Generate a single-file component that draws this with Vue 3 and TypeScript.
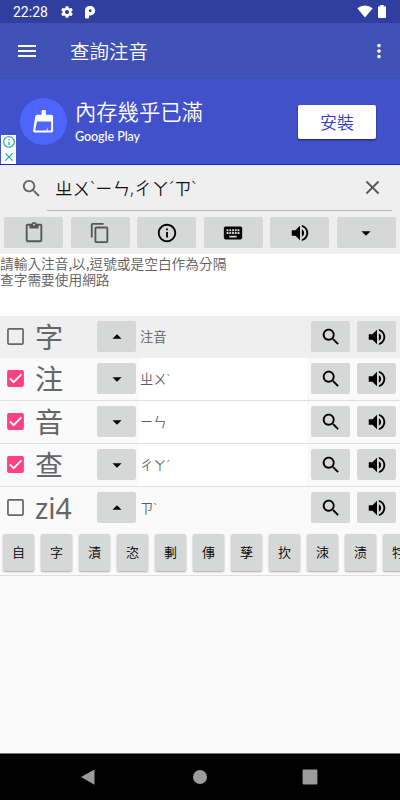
<script setup lang="ts">
interface Tool { id: string; icon: string; muted?: boolean }
interface Row { id: string; word: string; reading: string; checked: boolean; open: boolean; kind: string }

const icons: Record<string, string> = {
  search: 'M15.5 14h-.79l-.28-.27C15.41 12.59 16 11.11 16 9.5 16 5.91 13.09 3 9.5 3S3 5.91 3 9.5 5.91 16 9.5 16c1.61 0 3.09-.59 4.23-1.57l.27.28v.79l5 4.99L20.49 19l-4.99-5zm-6 0C7.01 14 5 11.99 5 9.5S7.01 5 9.5 5 14 7.01 14 9.5 11.99 14 9.5 14z',
  volume: 'M3 9v6h4l5 5V4L7 9H3zm13.5 3c0-1.77-1.02-3.29-2.5-4.03v8.05c1.48-.73 2.5-2.25 2.5-4.02zM14 3.23v2.06c2.89.86 5 3.54 5 6.71s-2.11 5.85-5 6.71v2.06c4.01-.91 7-4.49 7-8.77s-2.99-7.86-7-8.77z',
  paste: 'M19 2h-4.18C14.4.84 13.3 0 12 0S9.6.84 9.18 2H5c-1.1 0-2 .9-2 2v16c0 1.1.9 2 2 2h14c1.1 0 2-.9 2-2V4c0-1.1-.9-2-2-2zm-7 0c.55 0 1 .45 1 1s-.45 1-1 1-1-.45-1-1 .45-1 1-1zm7 18H5V4h2v3h10V4h2v16z',
  copy: 'M16 1H4c-1.1 0-2 .9-2 2v14h2V3h12V1zm3 4H8c-1.1 0-2 .9-2 2v14c0 1.1.9 2 2 2h11c1.1 0 2-.9 2-2V7c0-1.1-.9-2-2-2zm0 16H8V7h11v14z',
  info: 'M11 17h2v-6h-2v6zm1-15C6.48 2 2 6.48 2 12s4.48 10 10 10 10-4.48 10-10S17.52 2 12 2zm0 18c-4.41 0-8-3.59-8-8s3.59-8 8-8 8 3.59 8 8-3.59 8-8 8zM11 9h2V7h-2v2z',
  keyboard: 'M20 5H4c-1.1 0-1.99.9-1.99 2L2 17c0 1.1.9 2 2 2h16c1.1 0 2-.9 2-2V7c0-1.1-.9-2-2-2zm-9 3h2v2h-2V8zm0 3h2v2h-2v-2zM8 8h2v2H8V8zm0 3h2v2H8v-2zm-1 2H5v-2h2v2zm0-3H5V8h2v2zm9 7H8v-2h8v2zm0-4h-2v-2h2v2zm0-3h-2V8h2v2zm3 3h-2v-2h2v2zm0-3h-2V8h2v2z',
  down: 'M7 10l5 5 5-5z',
  up: 'M7 14l5-5 5 5z',
  close: 'M19 6.41L17.59 5 12 10.59 6.41 5 5 6.41 10.59 12 5 17.59 6.41 19 12 13.41 17.59 19 19 17.59 13.41 12z',
  gear: 'M19.43 12.98c.04-.32.07-.64.07-.98s-.03-.66-.07-.98l2.11-1.65c.19-.15.24-.42.12-.64l-2-3.46c-.12-.22-.39-.3-.61-.22l-2.49 1c-.52-.4-1.08-.73-1.69-.98l-.38-2.65C14.46 2.18 14.25 2 14 2h-4c-.25 0-.46.18-.49.42l-.38 2.65c-.61.25-1.17.59-1.69.98l-2.49-1c-.23-.09-.49 0-.61.22l-2 3.46c-.13.22-.07.49.12.64l2.11 1.65c-.04.32-.07.65-.07.98s.03.66.07.98l-2.11 1.65c-.19.15-.24.42-.12.64l2 3.46c.12.22.39.3.61.22l2.49-1c.52.4 1.08.73 1.69.98l.38 2.65c.03.24.24.42.49.42h4c.25 0 .46-.18.49-.42l.38-2.65c.61-.25 1.17-.59 1.69-.98l2.49 1c.23.09.49 0 .61-.22l2-3.46c.12-.22.07-.49-.12-.64l-2.11-1.65zM12 15.5c-1.93 0-3.5-1.57-3.5-3.5s1.57-3.5 3.5-3.5 3.5 1.57 3.5 3.5-1.57 3.5-3.5 3.5z',
  menu: 'M3 18h18v-2H3v2zm0-5h18v-2H3v2zm0-7v2h18V6H3z',
  more: 'M12 8c1.1 0 2-.9 2-2s-.9-2-2-2-2 .9-2 2 .9 2 2 2zm0 2c-1.1 0-2 .9-2 2s.9 2 2 2 2-.9 2-2-.9-2-2-2zm0 6c-1.1 0-2 .9-2 2s.9 2 2 2 2-.9 2-2-.9-2-2-2z',
}

const tools: Tool[] = [
  { id: 'paste', icon: 'paste', muted: true },
  { id: 'copy', icon: 'copy', muted: true },
  { id: 'info', icon: 'info' },
  { id: 'keyboard', icon: 'keyboard' },
  { id: 'speak', icon: 'volume' },
  { id: 'expand', icon: 'down' },
]

const rows: Row[] = [
  { id: 'head', word: '字', reading: '注音', checked: false, open: true, kind: 'head' },
  { id: 'zhu', word: '注', reading: 'ㄓㄨˋ', checked: true, open: false, kind: 'item' },
  { id: 'yin', word: '音', reading: 'ㄧㄣ', checked: true, open: false, kind: 'item' },
  { id: 'cha', word: '查', reading: 'ㄔㄚˊ', checked: true, open: false, kind: 'item' },
  { id: 'zi', word: 'zi4', reading: 'ㄗˋ', checked: false, open: true, kind: 'last' },
]

const query = 'ㄓㄨˋㄧㄣ,ㄔㄚˊㄗˋ'
const candidates: string[] = ['自', '字', '漬', '恣', '剚', '倳', '孳', '扻', '洓', '渍', '牸']

// Tone marks and commas are set in a narrow face, apart from the full-width symbols.
const split = (s: string): string[] => s.split(/([ˋˊ,])/).filter(Boolean)
const isTone = (s: string): boolean => /^[ˋˊ,]$/.test(s)
</script>

<template>
  <div class="screen">
    <div class="status">
      <span class="time">22:28</span>
      <svg class="gear" viewBox="0 0 24 24"><path :d="icons.gear" /></svg>
      <svg class="parking" viewBox="0 0 12 14"><path d="M1 13V5.500Q1 1 5.500 1H6.500A4.700 4.700 0 0 1 6.500 10.400H5V13Q3 14 1 13z" /><circle cx="6.200" cy="5.700" r="1.400" class="hole" /></svg>
      <span class="grow"></span>
      <svg class="wifi" viewBox="0 0 16 13"><path d="M8 12.5.3 3.2Q8-2.4 15.7 3.2z" /></svg>
      <svg class="battery" viewBox="0 0 8 13"><path d="M2.3 0h3.4v1.3H7q1 0 1 1V12q0 1-1 1H1q-1 0-1-1V2.300q0-1 1-1h1.300z" /></svg>
    </div>

    <header class="bar">
      <svg class="menu" viewBox="0 0 24 24"><path :d="icons.menu" /></svg>
      <h1 class="title">查詢注音</h1>
      <svg class="more" viewBox="0 0 24 24"><path :d="icons.more" /></svg>
    </header>

    <section class="ad">
      <div class="disc">
        <svg class="brush" viewBox="0 0 24 26">
          <path class="solid" d="M10 2q0-1 1-1h2.500q1 0 1 1v4H20q2 0 2 2v15q0 1.500-1.500 1.500H3q-2.200 0-1.800-2L3.300 8q.4-2 2.200-2H10z" />
          <path class="cut" d="M5.200 13H20v8.500q0 .8-.8.8h-3v-3.500l-1.200 3.500H4.300q-1 0-.8-1z" />
        </svg>
      </div>
      <div class="copy">
        <div class="headline">內存幾乎已滿</div>
        <div class="source">Google Play</div>
      </div>
      <button class="install">安裝</button>
      <div class="badge">
        <svg viewBox="0 0 24 24"><path :d="icons.info" /></svg>
        <svg viewBox="0 0 24 24"><path :d="icons.close" /></svg>
      </div>
    </section>

    <section class="panel">
      <div class="query">
        <svg class="lens" viewBox="0 0 24 24"><path :d="icons.search" /></svg>
        <div class="field">
          <span class="value"><span v-for="(p, i) in split(query)" :key="i" :class="{ tone: isTone(p) }">{{ p }}</span></span>
          <svg class="clear" viewBox="0 0 24 24"><path :d="icons.close" /></svg>
        </div>
      </div>
      <div class="tools">
        <button v-for="t in tools" :key="t.id" class="btn" :class="{ muted: t.muted }">
          <svg viewBox="0 0 24 24"><path :d="icons[t.icon]" /></svg>
        </button>
      </div>
    </section>

    <div class="hint">請輸入注音,以,逗號或是空白作為分隔<br />查字需要使用網路</div>

    <div v-for="r in rows" :key="r.id" class="row" :class="r.kind">
      <div class="left">
        <svg class="check" :class="{ on: r.checked }" viewBox="0 0 18 18">
          <rect x="1" y="1" width="16" height="16" rx="1" />
          <path v-if="r.checked" d="M3 8.800 7 12.800 15.200 4.600" />
        </svg>
        <span class="word">{{ r.word }}</span>
        <button class="btn"><svg viewBox="0 0 24 24"><path :d="r.open ? icons.up : icons.down" /></svg></button>
      </div>
      <div class="reading"><span v-for="(p, i) in split(r.reading)" :key="i" :class="{ tone: isTone(p) }">{{ p }}</span></div>
      <div class="right">
        <button class="btn"><svg viewBox="0 0 24 24"><path :d="icons.search" /></svg></button>
        <button class="btn"><svg viewBox="0 0 24 24"><path :d="icons.volume" /></svg></button>
      </div>
    </div>

    <div class="cands">
      <button v-for="c in candidates" :key="c" class="cand">{{ c }}</button>
    </div>

    <div class="grow"></div>
    <nav class="nav">
      <svg viewBox="0 0 16 16"><path d="M14.500.5v15.200L1 8.100z" /></svg>
      <svg class="home" viewBox="0 0 16 16"><circle cx="8" cy="8" r="7" /></svg>
      <svg viewBox="0 0 16 16"><rect x=".6" y=".6" width="14.800" height="14.800" rx="1" /></svg>
    </nav>
  </div>
</template>

<style>
body { margin: 0; background: #fafafa; }
</style>

<style scoped>
.screen { width: 400px; height: 800px; display: flex; flex-direction: column; overflow: hidden; background: #fafafa; font-family: "Noto Sans CJK TC", sans-serif; font-weight: 350; }
.screen > * { flex-shrink: 0; }
.screen > .grow { flex: 1 0 0; }
.grow { flex: 1; }
button { border: 0; padding: 0; margin: 0; font-family: inherit; font-weight: inherit; box-sizing: border-box; }
svg { display: block; fill: currentColor; flex-shrink: 0; }
h1 { margin: 0; }

.status { height: 23px; background: #303f9f; color: #fff; display: flex; align-items: center; padding: 0 13px; }
.time { width: 47px; font-family: Roboto, sans-serif; font-size: 14px; line-height: 23px; font-weight: 400; padding-top: 1px; }
.gear { width: 14px; height: 14px; }
.parking { width: 12px; height: 14px; margin-left: 10px; }
.hole { fill: #303f9f; }
.wifi { width: 16px; height: 13px; margin-right: 5px; }
.battery { width: 8px; height: 13px; margin-right: 1px; }

.bar { height: 56px; border-bottom: 1px solid #3b4cb6; background: #3f51b5; color: #fff; display: flex; align-items: center; box-sizing: border-box; padding: 0 10px 0 15px; }
.menu { width: 24px; height: 24px; }
.title { flex: 1; margin-left: 31px; font-size: 19.500px; font-weight: 350; line-height: 28px; }
.more { width: 22px; height: 22px; }

.ad { position: relative; height: 86px; box-sizing: border-box; background: #4150cb; border-bottom: 1px solid #1727bd; display: flex; align-items: center; padding: 0 24px 0 20px; color: #fff; }
.disc { width: 47px; height: 47px; border-radius: 50%; background: #4d64fd; display: flex; align-items: center; justify-content: center; }
.brush { width: 23px; height: 25px; }
.solid { fill: #fff; }
.cut { fill: #4d64fd; }
.copy { flex: 1; margin-left: 8px; }
.headline { font-size: 21.300px; line-height: 28px; }
.source { font-family: Lato, sans-serif; font-size: 12.500px; line-height: 18px; margin-top: 3px; font-weight: 500; letter-spacing: -.05px; }
.install { width: 78px; height: 34px; background: #fff; color: #303fc4; border-radius: 2px; font-size: 17px; line-height: 31px; padding-bottom: 1px; box-shadow: 0 1px 2px #0009; }
.badge { position: absolute; left: 1px; bottom: 0; width: 15px; height: 29px; background: #fff; color: #16a5bd; display: flex; flex-direction: column; align-items: center; justify-content: space-around; }
.badge svg { width: 14px; height: 14px; }

.panel { height: 89px; background: #efefef; }
.query { display: flex; height: 46px; padding: 0 8px 0 20px; align-items: flex-start; }
.lens { width: 23px; height: 23px; margin-top: 12px; color: #666; }
.field { flex: 1; height: 45px; margin-left: 4px; border-bottom: 1px solid #bbb; display: flex; align-items: center; justify-content: space-between; padding: 0 8px; color: #111; }
.value { font-size: 17.600px; line-height: 26px; white-space: nowrap; }
.tone { font-family: "Noto Sans", sans-serif; }
.clear { width: 23px; height: 23px; color: #555; }
.tools { display: flex; gap: 7.600px; padding: 6px 4px 0; }
.tools .btn { flex: 1; }
.btn { height: 31px; background: #d6d8d7; color: #000; border-radius: 2px; display: flex; align-items: center; justify-content: center; }
.btn svg { width: 22px; height: 22px; }
.btn.muted { color: #555; }

.hint { height: 62px; box-sizing: border-box; padding-top: 1px; background: #fff; color: #5c5c5c; font-size: 13.700px; line-height: 16px; white-space: nowrap; }

.row { height: 43px; box-sizing: border-box; border-bottom: 1px solid #e0e0e0; display: flex; background: #fff; }
.left { width: 139px; box-sizing: border-box; padding: 5px 3px 0 7px; display: flex; background: #fafafa; }
.left .btn { width: 39px; }
.check { width: 17px; height: 17px; margin-top: 7px; }
.check rect { fill: none; stroke: #666; stroke-width: 1.800; }
.check.on rect { fill: #ff4081; stroke: #ff4081; }
.check path { fill: none; stroke: #fff; stroke-width: 2; }
.word { flex: 1; margin-left: 11px; padding-top: 1px; font-size: 28.200px; font-weight: 400; line-height: 31px; color: #666; font-family: "Noto Sans", "Noto Sans CJK TC", sans-serif; white-space: nowrap; }
.reading { flex: 1; padding: 5px 0 0 1px; line-height: 31px; font-size: 13.300px; color: #5c5c5c; white-space: nowrap; }
.right { width: 93px; box-sizing: border-box; padding: 5px 4px 0; display: flex; justify-content: space-between; background: #fafafa; }
.right .btn { width: 39px; }
.head { height: 42px; border: 0; background: #efefef; }
.head .left, .head .right { background: #efefef; }
.last { border: 0; background: #fafafa; }

.cands { height: 46px; box-sizing: border-box; padding: 4px 0 0 3px; border-bottom: 1px solid #dedede; display: flex; gap: 7px; overflow: hidden; }
.cand { flex: 0 0 31px; height: 37px; background: #d6d8d7; border-radius: 2px; font-size: 13px; line-height: 34px; padding-bottom: 2px; color: #000; box-shadow: 0 1px 2px #0005; }

.nav { height: 47px; box-sizing: border-box; border-top: 1px solid #777; background: #000; color: #9b9b9b; display: flex; align-items: center; justify-content: space-between; padding: 0 82px 0 80px; }
.nav svg { width: 16px; height: 16px; }
.nav .home { margin-left: 2px; }
</style>
